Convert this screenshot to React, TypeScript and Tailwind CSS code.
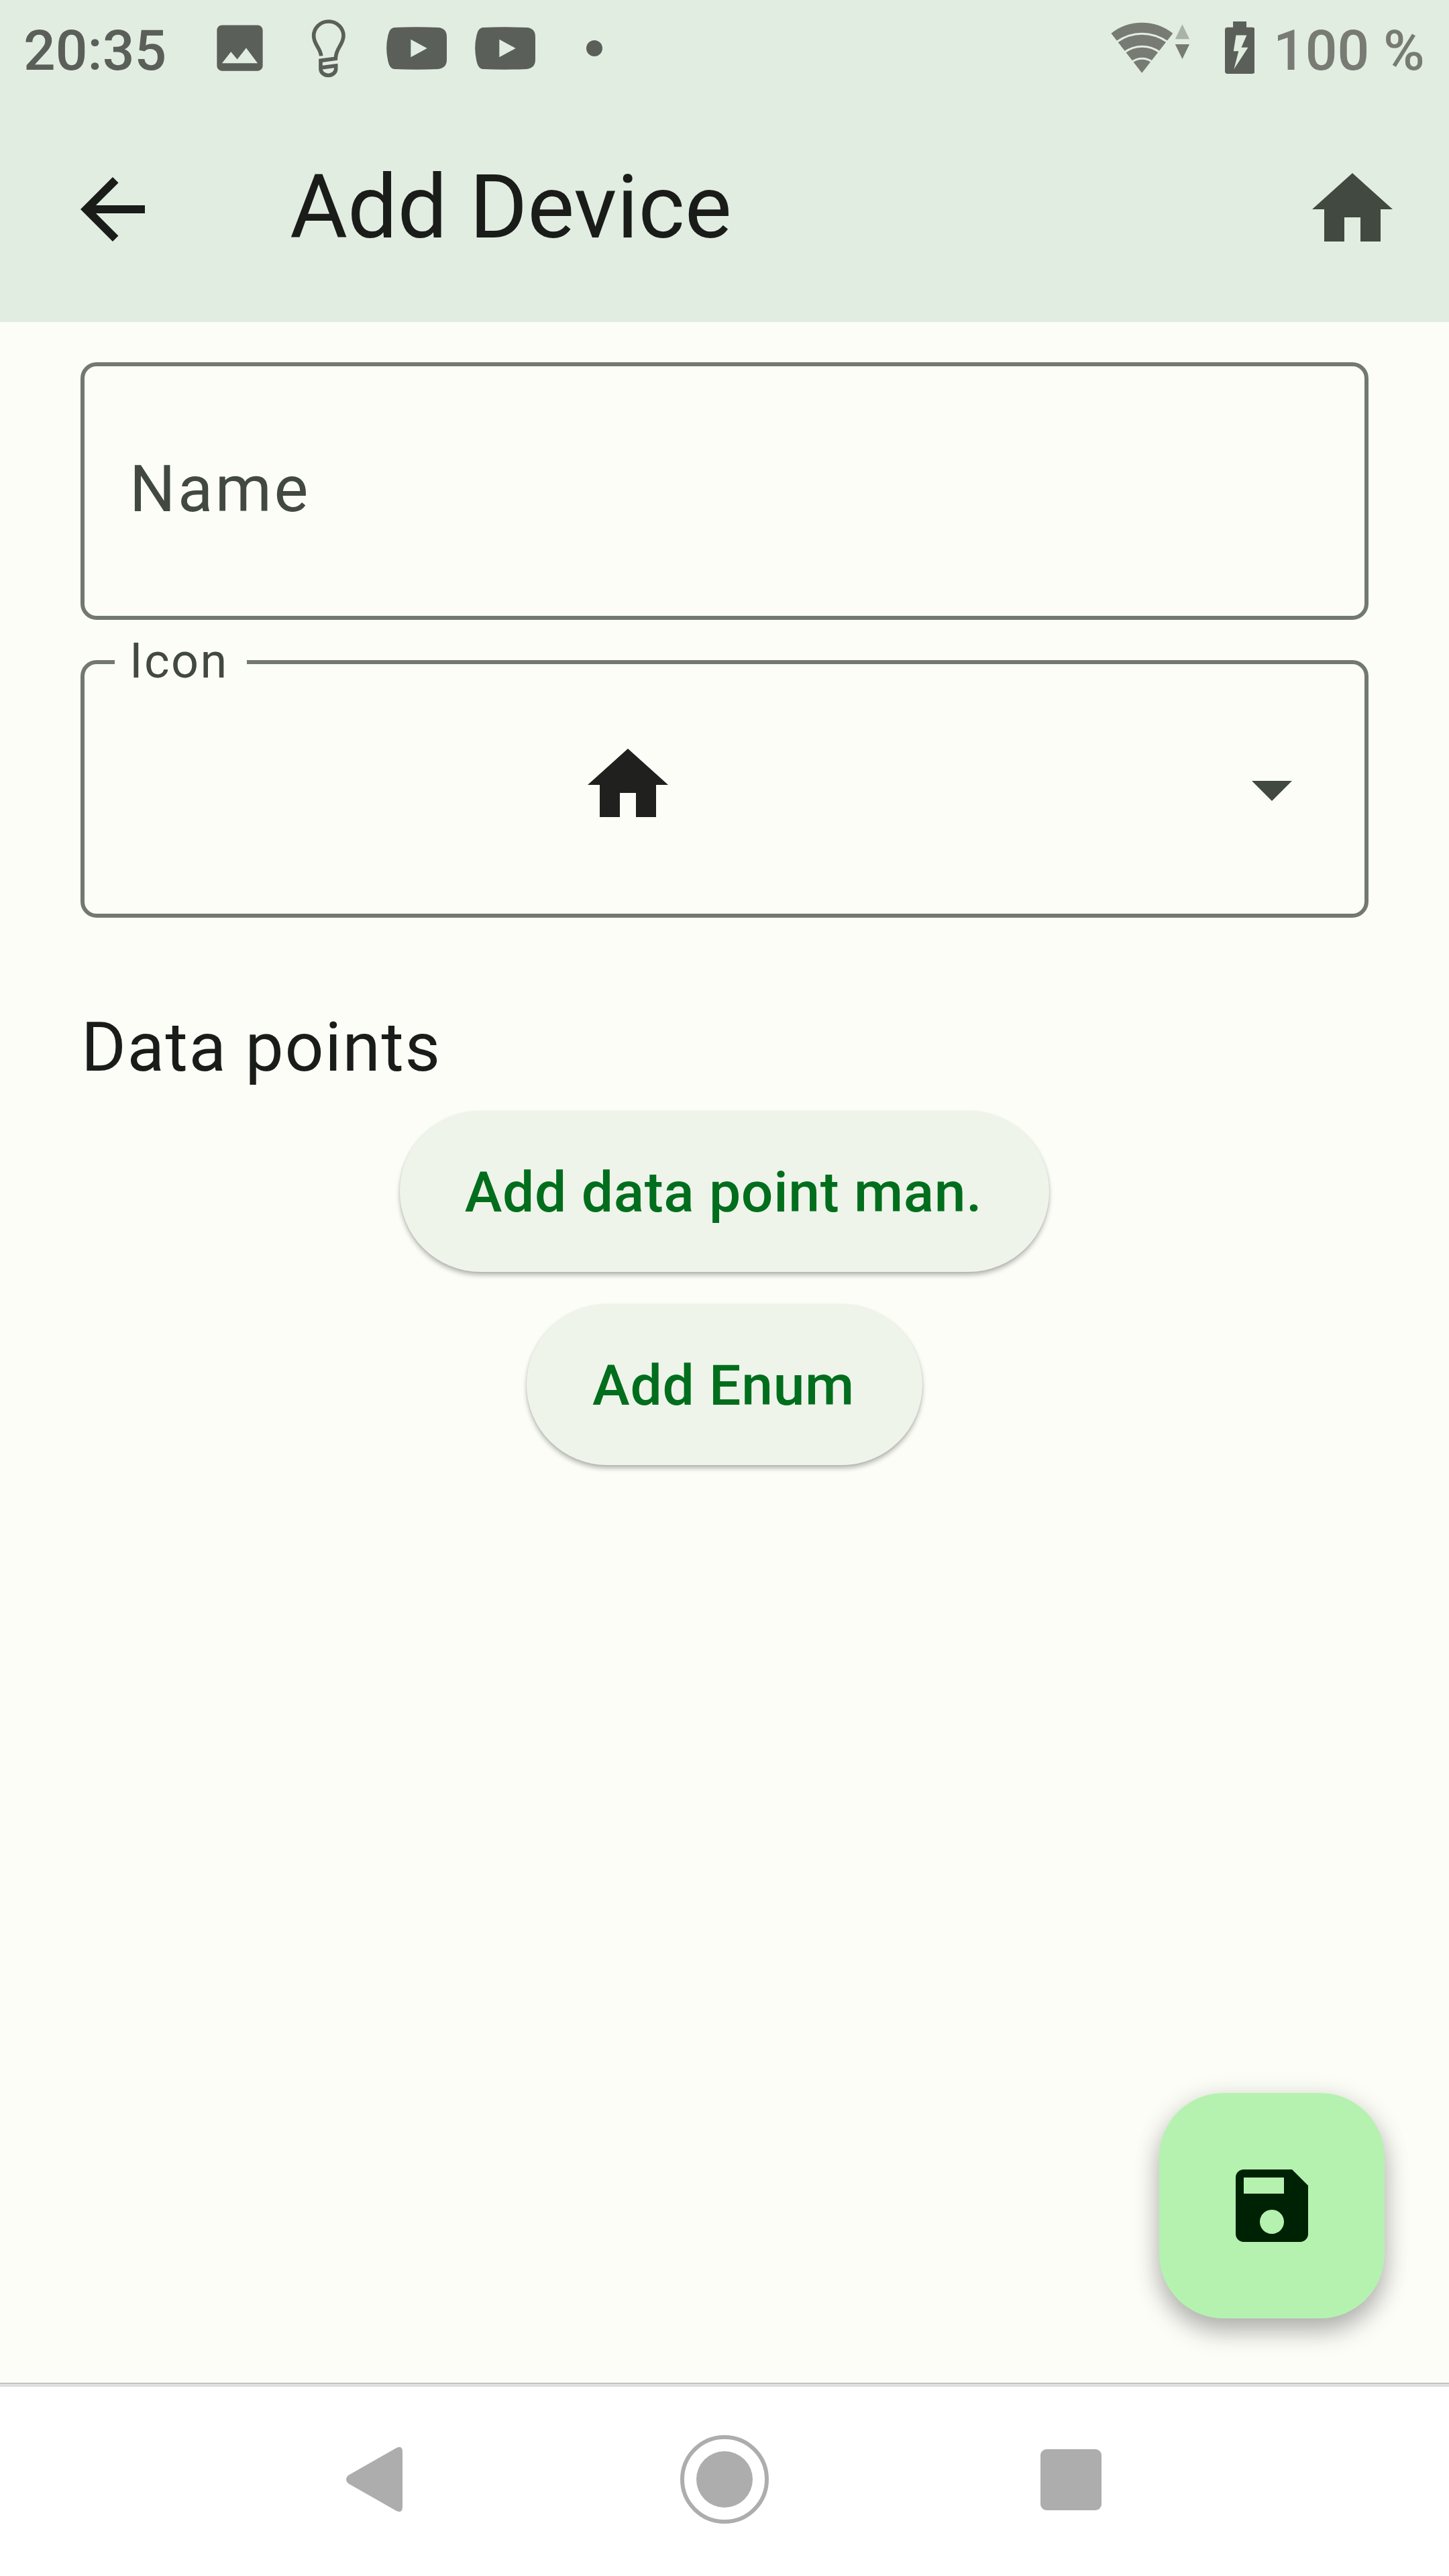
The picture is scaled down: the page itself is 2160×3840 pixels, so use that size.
import React from "react";

const HOUSE = "M10 20v-6h4v6h5v-8h3L12 3 2 12h3v8z";

function Icon({ d, className }: { d: string; className: string }) {
  return (
    <svg viewBox="0 0 24 24" fill="currentColor" className={className}>
      <path d={d} />
    </svg>
  );
}

function VideoIcon({ className }: { className: string }) {
  return (
    <svg viewBox="0 0 270 192" fill="currentColor" className={className}>
      <path
        fillRule="evenodd"
        d="M38 3Q135 -1 230 3C258 4 270 20 270 45V147C270 172 258 186 230 189Q135 193 38 189C18 188 12 172 7 152Q-6 96 7 40C12 20 18 4 38 3ZM109 56V136L182 96Z"
      />
    </svg>
  );
}

function StatusBar() {
  return (
    <div className="flex h-[144px] items-start text-[84px] leading-[96px] font-medium text-[#5b5f59]">
      <div className="ml-[35px] mt-[28px] w-[214px] whitespace-nowrap">20:35</div>
      <Icon
        className="ml-[63px] mt-[26px] size-[91px]"
        d="M21 19V5c0-1.1-.9-2-2-2H5c-1.1 0-2 .9-2 2v14c0 1.1.9 2 2 2h14c1.1 0 2-.9 2-2zM8.5 13.5l2.5 3.01L14.5 12l4.5 6H5l3.5-4.5z"
      />
      <svg viewBox="0 78 180 276" fill="none" stroke="currentColor" strokeWidth="17" className="ml-[57px] mt-[26px] h-[92px] w-[60px]">
        <path d="M56 250C54 215 23 200 23 160A66.500 64 0 0 1 156 160C156 200 121 215 121 262L54 271V308A34 29 0 0 0 122 308V294L62 302" />
      </svg>
      <VideoIcon className="ml-[56px] mt-[40px] h-[64px] w-[90px]" />
      <VideoIcon className="ml-[42px] mt-[40px] h-[64px] w-[90px]" />
      <div className="ml-[76px] mt-[60px] size-[24px] rounded-full bg-[#5b5f59]" />
      <svg viewBox="100 90 350 250" preserveAspectRatio="none" fill="#777b74" className="ml-auto mt-[30px] h-[83.3px] w-[120.5px]">
        <path d="M240 326L107 149Q165 101 240 101T374 149Z" />
        <g fill="none" stroke="#e2ede1" strokeWidth="9">
          <path d="M132 187Q182 151 240 151T350 187" />
          <path d="M164 234Q200 208 241 208T318 234" />
          <path d="M196 278Q216 262 241 262T286 278" />
        </g>
        <path d="M384 198H446L415 264Z" />
        <path fill="#a9b3a9" d="M415 109L446 175H384Z" />
      </svg>
      <svg viewBox="598 96 129 233" preserveAspectRatio="none" className="ml-[51px] mt-[32px] h-[78px] w-[44.5px]" fill="currentColor">
        <path
          fillRule="evenodd"
          d="M633 96H691V122H716Q727 122 727 133V318Q727 329 716 329H609Q598 329 598 318V133Q598 122 609 122H633ZM646 157L635 228H657L637 308L698 212H669L692 157Z"
        />
      </svg>
      <div className="ml-[28px] mr-[36px] mt-[28px] w-[226px] whitespace-nowrap text-[#777b74]">100 %</div>
    </div>
  );
}

function AppBar() {
  return (
    <div className="flex h-[336px] items-start px-[72px] pt-[96px]">
      <Icon className="ml-[24px] size-[144px] text-[#1a1c19]" d="M20 11H7.830l5.590-5.590L12 4l-8 8 8 8 1.410-1.410L7.830 13H20v-2z" />
      <h1 className="ml-[192px] mt-[-15px] flex-1 text-[132px] leading-[168px] text-[#1a1c19]">Add Device</h1>
      <Icon className="size-[144px] text-[#424940]" d={HOUSE} />
    </div>
  );
}

export default function App() {
  return (
    <div className="flex h-[3840px] w-[2160px] flex-col bg-[#fcfdf7] font-['Roboto',sans-serif]">
      <header className="bg-[#e2ede1]">
        <StatusBar />
        <AppBar />
      </header>

      <main className="relative flex flex-1 flex-col px-[120px] pt-[60px]">
        <div className="flex h-[384px] items-center rounded-[24px] border-[6px] border-[#72796f] px-[67px] pb-[6px] text-[96px] tracking-[3.5px] text-[#424940]">
          Name
        </div>

        <div className="relative mt-[60px] flex h-[384px] items-center rounded-[24px] border-[6px] border-[#72796f]">
          <span className="absolute left-[45px] top-[-46px] w-[197px] bg-[#fcfdf7] pl-[22px] text-[72px] leading-[84px] tracking-[2.4px] text-[#424940]">
            Icon
          </span>
          <Icon className="mb-[12px] ml-[738px] size-[144px] text-[#20211f]" d={HOUSE} />
          <Icon className="ml-auto mr-[66px] size-[144px] text-[#424940]" d="M7 10l5 5 5-5z" />
        </div>

        <h2 className="mt-[121px] h-[167px] pl-px text-[102px] leading-[144px] tracking-[1.6px] text-[#1a1c19]">Data points</h2>

        <div className="flex flex-col items-center gap-[48px] text-[84px] font-medium tracking-[0.7px] text-[#006e1c]">
          <button className="h-[240px] w-[968px] rounded-full bg-[#eff4eb] pt-[4px] pr-[3px] shadow-[0_5px_7px_rgba(0,0,0,0.26),0_1px_3px_rgba(0,0,0,0.1)]">
            Add data point man.
          </button>
          <button className="h-[240px] w-[590px] rounded-full bg-[#eff4eb] pt-[4px] pr-[3px] shadow-[0_5px_7px_rgba(0,0,0,0.26),0_1px_3px_rgba(0,0,0,0.1)]">
            Add Enum
          </button>
        </div>

        <button className="absolute bottom-[96px] right-[96px] flex size-[336px] items-center justify-center rounded-[96px] bg-[#b5f2b0] text-[#002204] shadow-[0_20px_36px_rgba(0,0,0,0.26),0_4px_40px_rgba(0,0,0,0.1)]">
          <Icon
            className="size-[144px]"
            d="M17 3H5c-1.11 0-2 .9-2 2v14c0 1.1.89 2 2 2h14c1.1 0 2-.9 2-2V7l-4-4zm-5 16c-1.66 0-3-1.34-3-3s1.34-3 3-3 3 1.34 3 3-1.34 3-3 3zm3-10H5V5h10v4z"
          />
        </button>
      </main>

      <nav className="flex h-[288px] flex-col bg-white text-[#adadad]">
        <div className="h-[6px] border-t border-[#a6a6a6] bg-[#dedede]" />
        <div className="flex flex-1 items-center pb-[6px]">
          <svg viewBox="0 0 84 98" fill="currentColor" className="ml-[516px] h-[98px] w-[84px]">
            <path d="M3 43L75 2Q84 -2 84 8V90Q84 100 75 96L3 55Q-3 49 3 43Z" />
          </svg>
          <div className="ml-[414px] flex size-[132px] items-center justify-center rounded-full border-[6px] border-[#adadad]">
            <div className="size-[84px] rounded-full bg-[#adadad]" />
          </div>
          <div className="ml-[405px] size-[91px] rounded-[9px] bg-[#adadad]" />
        </div>
      </nav>
    </div>
  );
}
